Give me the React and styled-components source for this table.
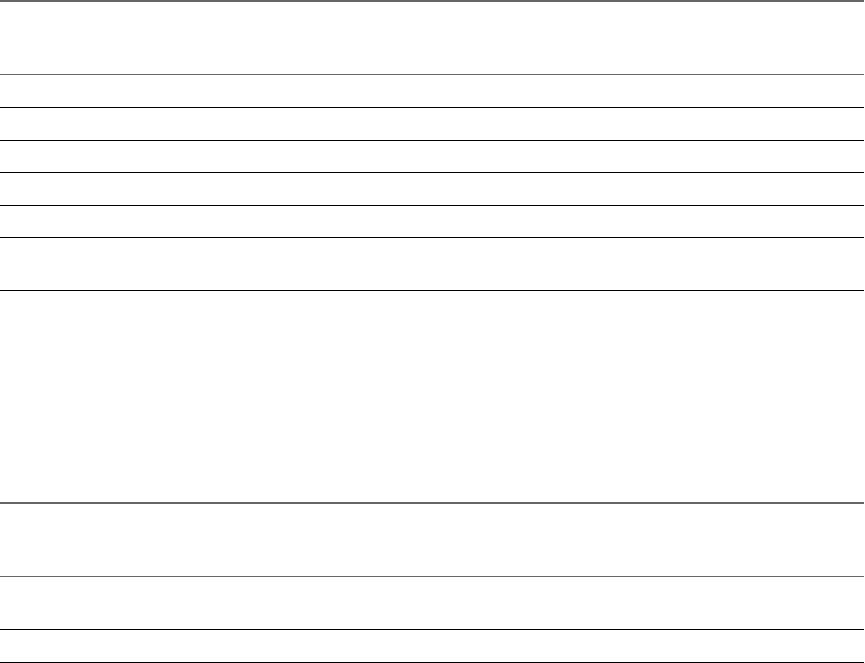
import styled, { createGlobalStyle } from "styled-components";

const GlobalStyle = createGlobalStyle`
  html, body {
    margin: 0;
    padding: 0;
    background: #fff;
    font-family: "Liberation Sans", Arial, sans-serif;
  }
`;

const Page = styled.div`
  width: 864px;
  display: flex;
  flex-direction: column;
`;

const Table = styled.div`
  display: flex;
  flex-direction: column;
  border-top: 2px solid #666;
  margin-bottom: ${(p) => p.$gap || 0}px;
`;

const Row = styled.div`
  display: grid;
  grid-template-columns: 440px 150px 1fr;
  height: ${(p) => p.$h}px;
  border-bottom: 1px solid ${(p) => (p.$head ? "#666" : "#000")};
`;

const Cell = styled.div`
  font-size: 14px;
  color: #222;
  padding: 6px 8px;
`;

const Line = ({ h, head }) => (
  <Row $h={h} $head={head}>
    <Cell />
    <Cell />
    <Cell />
  </Row>
);

const App = () => (
  <>
    <GlobalStyle />
    <Page>
      <Table $gap={211}>
        <Line h={72} head />
        <Line h={32} />
        <Line h={32} />
        <Line h={31} />
        <Line h={32} />
        <Line h={31} />
        <Line h={52} />
      </Table>
      <Table>
        <Line h={72} head />
        <Line h={52} />
        <Line h={32} />
      </Table>
    </Page>
  </>
);

export default App;
